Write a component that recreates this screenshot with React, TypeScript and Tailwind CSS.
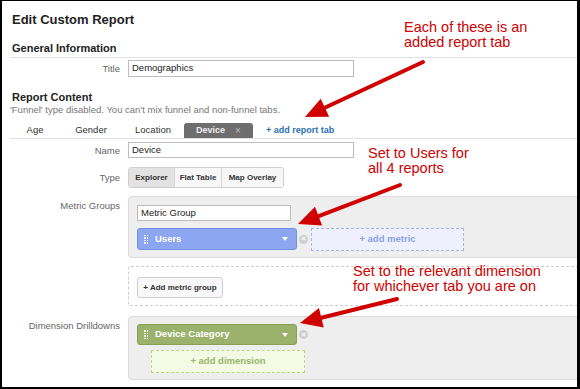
import React from 'react';

const RED = '#d00000';

// arrow drawn from tail (x1,y1) to tip (x2,y2), page coords
function Arrow({ x1, y1, x2, y2 }: { x1: number; y1: number; x2: number; y2: number }) {
  const len = Math.hypot(x2 - x1, y2 - y1);
  const ux = (x2 - x1) / len;
  const uy = (y2 - y1) / len;
  const hl = 22;
  const hw = 10;
  const bx = x2 - ux * hl;
  const by = y2 - uy * hl;
  const pts = `${x2},${y2} ${bx - uy * hw},${by + ux * hw} ${bx + uy * hw},${by - ux * hw}`;
  return (
    <g>
      <line x1={x1} y1={y1} x2={bx + ux * 2} y2={by + uy * 2} stroke={RED} strokeWidth={4} strokeLinecap="round" />
      <polygon points={pts} fill={RED} />
    </g>
  );
}

function Label({ text, className = '' }: { text: string; className?: string }) {
  return (
    <div className={`w-[110px] shrink-0 text-right text-[9.5px] leading-[11px] text-[#666] ${className}`}>{text}</div>
  );
}

function Grip() {
  return (
    <div className="grid grid-cols-2 gap-x-[1px] gap-y-[1px] ml-[6px]">
      {Array.from({ length: 8 }).map((_, i) => (
        <span key={i} className="w-[1.5px] h-[1.5px] bg-white/80" />
      ))}
    </div>
  );
}

function Remove() {
  return (
    <div className="w-[9px] h-[9px] rounded-full bg-[#cfcfcf] flex items-center justify-center text-white text-[8px] leading-none font-bold">
      ×
    </div>
  );
}

function Caret() {
  return <div className="w-0 h-0 border-l-[3.5px] border-r-[3.5px] border-t-[4px] border-l-transparent border-r-transparent border-t-white mr-[8px]" />;
}

export default function App() {
  return (
    <div className="relative w-[580px] h-[389px] overflow-hidden bg-white border-black border-t border-l-2 border-r-[3px] border-b-2 font-['Liberation_Sans',Arial,sans-serif] text-[#222]">
      <div className="pl-[8px]">
        <h1 className="mt-[11px] pl-[2px] text-[13px] leading-[15px] font-bold">Edit Custom Report</h1>

        <h2 className="mt-[15px] pl-[2px] pb-[2px] text-[11px] leading-[13px] font-bold border-b border-[#e2e2e2]">
          General Information
        </h2>

        <div className="mt-[2px] flex items-center gap-[8px]">
          <Label text="Title" />
          <div className="w-[226px] h-[17px] border border-[#bdbdbd] pl-[3px] flex items-center text-[9.5px]">Demographics</div>
        </div>

        <h2 className="mt-[14px] pl-[2px] text-[11px] leading-[13px] font-bold">Report Content</h2>
        <p className="text-[9.5px] leading-[11px] text-[#777]">
          'Funnel' type disabled. You can't mix funnel and non-funnel tabs.
        </p>

        <div className="mt-[8px] h-[16px] flex items-stretch border-b border-[#e2e2e2] text-[9.5px] text-[#333]">
          <div className="w-[50px] flex items-center justify-center">Age</div>
          <div className="w-[62px] flex items-center justify-center">Gender</div>
          <div className="w-[62px] flex items-center justify-center">Location</div>
          <div className="w-[69px] h-[15px] bg-[#6e6e6e] rounded-t-[3px] flex items-center justify-center gap-[10px] text-[9px] font-bold text-[#eee]">
            <span>Device</span>
            <span className="text-[#bbb] font-normal text-[10px]">×</span>
          </div>
          <div className="ml-[13px] flex items-center text-[9px] font-bold text-[#2a6fb4]">+ add report tab</div>
        </div>

        <div className="mt-[3px] flex items-center gap-[8px]">
          <Label text="Name" />
          <div className="w-[226px] h-[16px] border border-[#bdbdbd] pl-[3px] flex items-center text-[9.5px]">Device</div>
        </div>

        <div className="mt-[9px] flex items-center gap-[8px]">
          <Label text="Type" />
          <div className="flex h-[21px] border border-[#cfcfcf] rounded-[3px] overflow-hidden text-[8px] font-bold text-[#333]">
            <div className="w-[45px] bg-[#e2e2e2] flex items-center justify-center">Explorer</div>
            <div className="w-[47px] bg-[#f7f7f7] border-l border-[#d6d6d6] flex items-center justify-center">Flat Table</div>
            <div className="w-[62px] bg-[#f7f7f7] border-l border-[#d6d6d6] flex items-center justify-center">Map Overlay</div>
          </div>
        </div>

        <div className="mt-[8px] flex items-start gap-[8px]">
          <Label text="Metric Groups" className="pt-[4px]" />
          <div className="flex-1 bg-[#eeeeee] border border-r-0 border-[#dcdcdc] rounded-l-[4px] pl-[8px] pt-[8px] pb-[7px]">
            <div className="w-[154px] h-[16px] bg-white border border-[#bdbdbd] pl-[3px] flex items-center text-[9.5px]">Metric Group</div>
            <div className="mt-[7px] h-[22px] flex items-center">
              <div className="w-[160px] h-[22px] bg-[#8ca6f1] border border-[#7391e4] rounded-[3px] flex items-center">
                <Grip />
                <span className="ml-[7px] flex-1 text-[9.5px] font-bold text-white">Users</span>
                <Caret />
              </div>
              <div className="ml-[2px]">
                <Remove />
              </div>
              <div className="ml-[3px] w-[153px] h-[23px] bg-[#eef1fd] border border-dashed border-[#a3b3ee] flex items-center justify-center text-[9.5px] font-bold text-[#8fa1e6]">
                + add metric
              </div>
            </div>
          </div>
        </div>

        <div className="mt-[8px] ml-[118px] border border-r-0 border-dashed border-[#cfcfcf] rounded-l-[3px] pl-[8px] pt-[10px] pb-[7px]">
          <div className="w-[86px] h-[21px] bg-[#f8f8f8] border border-[#cfcfcf] rounded-[3px] flex items-center justify-center text-[8px] font-bold text-[#333]">
            + Add metric group
          </div>
        </div>

        <div className="mt-[10px] flex items-start gap-[8px]">
          <Label text="Dimension Drilldowns" className="pt-[4px]" />
          <div className="flex-1 bg-[#eeeeee] border border-r-0 border-[#dcdcdc] rounded-l-[4px] pl-[8px] pt-[7px] pb-[6px]">
            <div className="h-[21px] flex items-center">
              <div className="w-[160px] h-[21px] bg-[#9bb26c] border border-[#86a057] rounded-[3px] flex items-center">
                <Grip />
                <span className="ml-[7px] flex-1 text-[9.5px] font-bold text-white">Device Category</span>
                <Caret />
              </div>
              <div className="ml-[2px]">
                <Remove />
              </div>
            </div>
            <div className="mt-[5px] ml-[14px] w-[154px] h-[23px] bg-[#f3fbe4] border border-dashed border-[#bdd48f] flex items-center justify-center text-[9.5px] font-bold text-[#9ab56c]">
              + add dimension
            </div>
          </div>
        </div>
      </div>

      <div className="absolute left-[402px] top-[19px] text-[14.5px] leading-[15px] text-[#d00000]">
        Each of these is an
        <br />
        added report tab
      </div>
      <div className="absolute left-[366px] top-[145px] text-[14.5px] leading-[15px] text-[#d00000]">
        Set to Users for
        <br />
        all 4 reports
      </div>
      <div className="absolute left-[351px] top-[263px] text-[14.5px] leading-[14.5px] text-[#d00000]">
        Set to the relevant dimension
        <br />
        for whichever tab you are on
      </div>

      <svg className="absolute left-[-2px] top-[-1px] pointer-events-none" width={580} height={389}>
        <Arrow x1={423} y1={62} x2={305} y2={117} />
        <Arrow x1={400} y1={185} x2={298} y2={224} />
        <Arrow x1={397} y1={299} x2={300} y2={323} />
      </svg>
    </div>
  );
}
